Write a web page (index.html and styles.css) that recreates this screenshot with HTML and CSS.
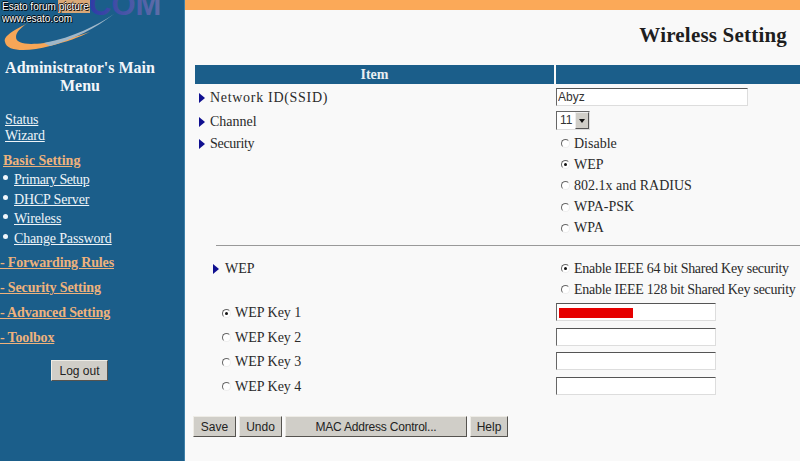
FILE: index.html
```html
<!DOCTYPE html>
<html>
<head>
<meta charset="utf-8">
<title>Wireless Setting</title>
<link rel="stylesheet" href="styles.css">
</head>
<body>
<div class="page">
  <aside class="side">
    <div class="logo">
      <svg class="logo-art" width="184" height="52" viewBox="0 0 184 52">
        <defs>
          <linearGradient id="comfade" x1="0" x2="1" y1="0" y2="0">
            <stop offset="0" stop-color="#2f3aa6"/>
            <stop offset="1" stop-color="#5f6fa8"/>
          </linearGradient>
        </defs>
        <path d="M30 22 C14 30 3 36 5 42 C7 52 28 52 50 46 C66 42 80 37 90 32 C76 37 60 41 44 43 C28 45 16 44 16 37 C16 32 22 26 30 22 Z" fill="#f7a657"/>
        <path d="M50 46 C74 39 96 28 114 14 C96 26 74 37 44 43 Z" fill="#9fb7c9"/>
        <path d="M58 0 H90 V13 H58 Z" fill="#d9a878"/>
        <text class="logo-com" x="89" y="15" fill="url(#comfade)">COM</text>
      </svg>
      <div class="mark">Esato forum picture<br>www.esato.com</div>
    </div>
    <h1 class="side-title">Administrator's Main Menu</h1>
    <nav class="nav">
      <a class="link" href="#">Status</a>
      <a class="link" href="#">Wizard</a>
      <a class="group first" href="#">Basic Setting</a>
      <ul class="sub">
        <li><a class="link tight" href="#">Primary Setup</a></li>
        <li><a class="link" href="#">DHCP Server</a></li>
        <li><a class="link" href="#">Wireless</a></li>
        <li><a class="link" href="#">Change Password</a></li>
      </ul>
      <a class="group" href="#">- Forwarding Rules</a>
      <a class="group" href="#">- Security Setting</a>
      <a class="group" href="#">- Advanced Setting</a>
      <a class="group" href="#">- Toolbox</a>
    </nav>
    <div class="logout-row"><button class="btn logout" type="button">Log out</button></div>
  </aside>
  <main class="main">
    <div class="topbar"></div>
    <h2 class="title">Wireless Setting</h2>
    <div class="thead">
      <div class="th">Item</div>
      <div class="th"></div>
    </div>
    <div class="form">
      <div class="row r-ssid">
        <div class="lab wide"><span class="arrow"></span>Network ID(SSID)</div>
        <div class="val"><input class="text ssid" type="text" value="Abyz"></div>
      </div>
      <div class="row r-chan">
        <div class="lab"><span class="arrow"></span>Channel</div>
        <div class="val"><span class="select"><span class="sel-v">11</span><span class="sel-b"></span></span></div>
      </div>
      <div class="row r-sec">
        <div class="lab narrow"><span class="arrow"></span>Security</div>
        <div class="val opts">
          <label class="opt"><span class="radio"></span>Disable</label>
          <label class="opt"><span class="radio on"></span>WEP</label>
          <label class="opt"><span class="radio"></span>802.1x and RADIUS</label>
          <label class="opt"><span class="radio"></span>WPA-PSK</label>
          <label class="opt"><span class="radio"></span>WPA</label>
        </div>
      </div>
      <div class="rule"></div>
      <div class="row r-wep">
        <div class="lab lab2"><span class="arrow"></span>WEP</div>
        <div class="val opts long">
          <label class="opt"><span class="radio on"></span>Enable IEEE 64 bit Shared Key security</label>
          <label class="opt"><span class="radio"></span>Enable IEEE 128 bit Shared Key security</label>
        </div>
      </div>
      <div class="keys">
        <div class="row key"><label class="lab3"><span class="radio on"></span>WEP Key 1</label><div class="val"><span class="keybox"><span class="redact"></span></span></div></div>
        <div class="row key"><label class="lab3"><span class="radio"></span>WEP Key 2</label><div class="val"><span class="keybox"></span></div></div>
        <div class="row key"><label class="lab3"><span class="radio"></span>WEP Key 3</label><div class="val"><span class="keybox"></span></div></div>
        <div class="row key"><label class="lab3"><span class="radio"></span>WEP Key 4</label><div class="val"><span class="keybox"></span></div></div>
      </div>
      <div class="actions">
        <button class="btn b-save" type="button">Save</button>
        <button class="btn b-undo" type="button">Undo</button>
        <button class="btn b-mac" type="button">MAC Address Control...</button>
        <button class="btn b-help" type="button">Help</button>
      </div>
    </div>
  </main>
</div>
</body>
</html>
```
FILE: styles.css
```css
* { box-sizing: border-box; }
html, body { margin: 0; padding: 0; background: #fff; }
body { width: 800px; height: 475px; overflow: hidden; font-family: "Liberation Serif", serif; font-size: 14px; color: #2a2a2a; }
.page { display: flex; height: 461px; }

.side { width: 185px; flex: none; background: #1b5e8a; border-right: 1px solid #3f80a8; color: #fff; }
.logo { position: relative; height: 52px; overflow: hidden; }
.logo-art { display: block; }
.logo-com { font-family: "Liberation Sans", sans-serif; font-weight: 700; font-size: 31px; }
.mark { position: absolute; left: 2px; top: 1px; font-family: "Liberation Sans", sans-serif; font-size: 10px; line-height: 12px; color: #fff; text-shadow: 1px 1px 0 #000, -1px 0 0 #000, 0 -1px 0 #000; }
.side-title { margin: 7px 0 0; padding: 0 24px 0 0; font-size: 16px; line-height: 18px; font-weight: 700; text-align: center; color: #f2f6fa; }
.nav { display: flex; flex-direction: column; align-items: flex-start; margin-top: 17px; }
.link { color: #eef4f8; text-decoration: underline; font-size: 14px; line-height: 16px; letter-spacing: -0.15px; }
.link.tight { letter-spacing: -0.4px; }
.nav > .link { margin-left: 5px; }
.group { color: #eeb27c; text-decoration: underline; font-weight: 700; font-size: 14px; line-height: 16px; margin-top: 9px; white-space: pre; letter-spacing: -0.15px; }
.group.first { margin-left: 3px; letter-spacing: 0; }
.sub { list-style: none; margin: 3px 0 0; padding: 0 0 0 14px; }
.sub li { position: relative; height: 19.5px; line-height: 16px; }
.sub li::before { content: ""; position: absolute; left: -11px; top: 3px; width: 5px; height: 5px; border-radius: 50%; background: #f0f6fb; }
.sub + .group { margin-top: 5px; }
.logout-row { display: flex; margin-top: 14px; padding-left: 51px; }
.logout { width: 57px; height: 21px; }

.btn { display: block; padding: 0; font-family: "Liberation Sans", sans-serif; font-size: 12px; color: #222; background: #d0cec8; border: 1px solid; border-color: #eeece6 #55534f #55534f #eeece6; border-radius: 0; }

.main { flex: 1; min-width: 0; background: #f9f9f9; }
.topbar { height: 10px; background: #fba958; }
.title { margin: 13px 13px 0 0; font-size: 21px; line-height: 24px; font-weight: 700; text-align: right; color: #1e1e1e; letter-spacing: 0.2px; }
.thead { display: grid; grid-template-columns: 359px 1fr; gap: 2px; margin: 18px 0 0 10px; height: 18px; }
.th { background: #1b5e8a; color: #e8eef2; font-weight: 700; font-size: 14px; line-height: 19px; text-align: center; }
.form { padding-left: 10px; }
.row { display: grid; grid-template-columns: 361px 1fr; }
.lab { display: flex; align-items: center; padding-left: 4px; height: 17px; }
.lab.wide { letter-spacing: 0.7px; }
.lab.narrow { letter-spacing: -0.3px; }
.arrow { flex: none; width: 0; height: 0; margin-right: 5px; border-left: 6px solid #101090; border-top: 5.5px solid transparent; border-bottom: 5.5px solid transparent; }
.lab2 { padding-left: 18px; }
.lab2 .arrow { margin-right: 6px; }
.r-ssid { margin-top: 5px; height: 23px; }
.r-ssid .lab { margin-top: 1px; }
.r-chan { height: 22px; }
.r-chan .lab { margin-top: 2px; }
.r-sec { height: 112px; }
.r-sec .lab { margin-top: 2px; }
.val { min-width: 0; }
.text { display: block; width: 192px; height: 18px; padding: 0 1px; font-family: "Liberation Sans", sans-serif; font-size: 12px; color: #333; background: #fff; border: 1px solid; border-color: #555 #ddd #ddd #666; border-radius: 0; outline: 0; }
.select { display: flex; width: 34px; height: 19px; margin-top: 0; background: #fff; border: 1px solid; border-color: #666 #ddd #ddd #666; font-family: "Liberation Sans", sans-serif; font-size: 12px; color: #333; }
.sel-v { flex: 1; padding-left: 3px; line-height: 17px; }
.sel-b { position: relative; width: 14px; background: #d0cec8; border: 1px solid; border-color: #eee #555 #555 #eee; }
.sel-b::after { content: ""; position: absolute; left: 3px; top: 6px; border-top: 4px solid #111; border-left: 3px solid transparent; border-right: 3px solid transparent; }
.opts { display: flex; flex-direction: column; }
.opts.long { letter-spacing: -0.28px; margin-top: -1px; }
.opt { display: flex; align-items: center; height: 21.2px; padding-left: 5px; white-space: nowrap; }
.radio { flex: none; width: 9px; height: 9px; margin-right: 4px; border-radius: 50%; border: 1px solid; border-color: #666 #eee #eee #666; background: #fff; position: relative; }
.radio.on::after { content: ""; position: absolute; left: 2px; top: 2px; width: 3px; height: 3px; border-radius: 50%; background: #111; }
.rule { height: 1px; margin: 0 0 0 21px; background: #999; }
.r-wep { margin-top: 13px; height: 43px; }
.r-wep .lab { margin-top: 1px; }
.keys { display: flex; flex-direction: column; margin-top: 1px; }
.key { height: 24.6px; }
.lab3 { display: flex; align-items: center; height: 18px; margin-top: 1px; padding-left: 27px; }
.keybox { display: block; position: relative; width: 160px; height: 18px; background: #fff; border: 1px solid; border-color: #555 #ddd #ddd #666; }
.redact { position: absolute; left: 2px; top: 4px; width: 74px; height: 10px; background: #e60000; }
.actions { display: flex; gap: 3px; margin: 15px 0 0 -2px; }
.btn.b-save { width: 43px; height: 21px; }
.btn.b-undo { width: 43px; height: 21px; }
.btn.b-mac { width: 182px; height: 21px; letter-spacing: -0.2px; }
.btn.b-help { width: 38px; height: 21px; }
```
